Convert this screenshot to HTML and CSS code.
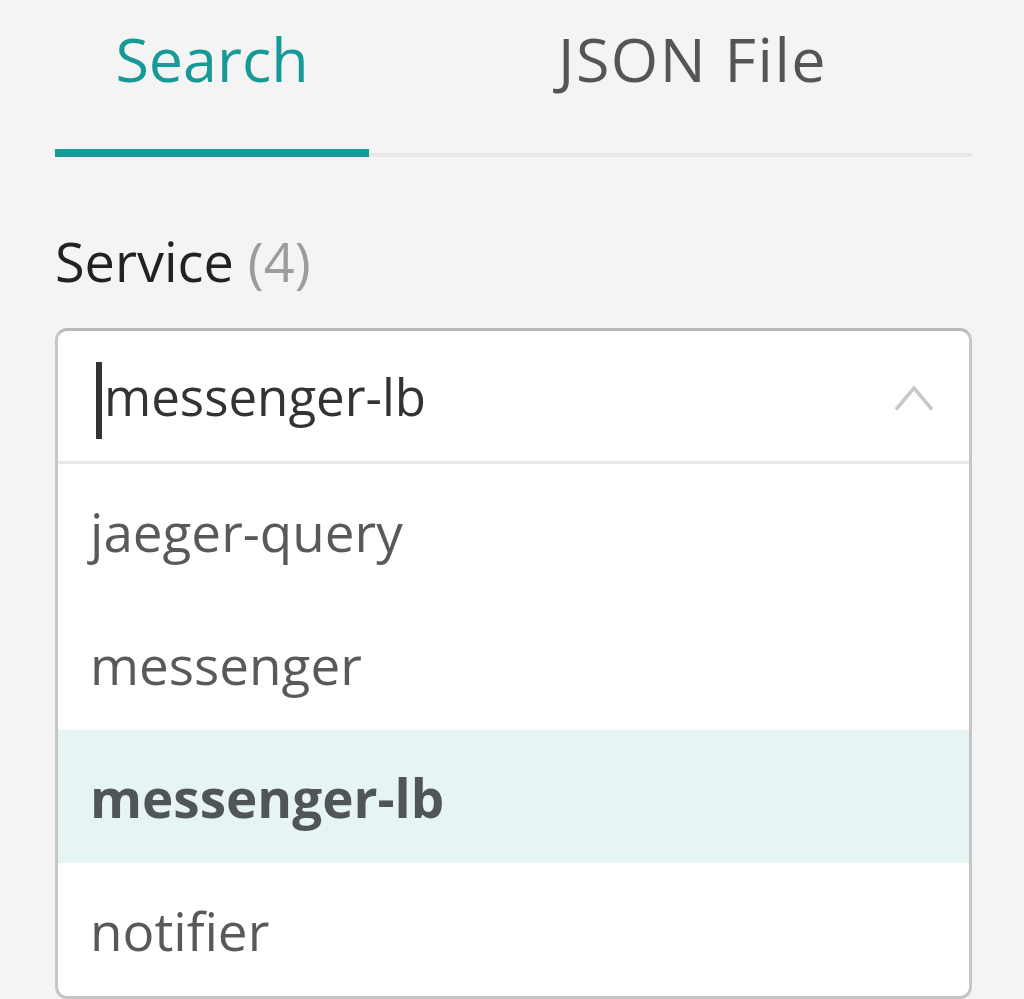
FILE: index.html
```html
<!DOCTYPE html>
<html lang="en">
<head>
<meta charset="utf-8">
<title>Search</title>
<link rel="stylesheet" href="styles.css">
</head>
<body>
<div class="panel">
  <div class="tabs">
    <div class="tab tab-active">Search</div>
    <div class="tab tab-second">JSON File</div>
  </div>
  <div class="field-label">Service <span class="count">(4)</span></div>
  <div class="select">
    <div class="select-input">
      <span class="caret"></span>
      <span class="select-value">messenger-lb</span>
      <svg class="chevron" width="42" height="28" viewBox="0 0 42 28" aria-hidden="true">
        <polyline points="3,25.5 21,4 39,25.5" fill="none" stroke="#c9c9c9" stroke-width="3.6"/>
      </svg>
    </div>
    <ul class="options">
      <li class="option">jaeger-query</li>
      <li class="option">messenger</li>
      <li class="option option-active">messenger-lb</li>
      <li class="option">notifier</li>
    </ul>
  </div>
</div>
</body>
</html>
```

FILE: styles.css
```css
html, body {
  margin: 0;
  padding: 0;
  background: #f4f4f4;
}

body {
  font-family: "Open Sans", "Noto Sans", sans-serif;
  overflow: hidden;
  height: 999px;
}

.panel {
  width: 917px;
  margin-left: 55px;
  padding-top: 17px;
}

.tabs {
  display: flex;
  border-bottom: 4px solid #e8e8e8;
}

.tab {
  font-size: 61px;
  line-height: 83px;
  padding-bottom: 49px;
  color: rgba(0, 0, 0, 0.65);
  white-space: nowrap;
}

.tab-active {
  width: 314px;
  text-align: center;
  color: #169a98;
  border-bottom: 8px solid #169a98;
  margin-bottom: -4px;
}

.tab-second {
  margin-left: 123px;
  padding-left: 66px;
  letter-spacing: 1.5px;
}

.field-label {
  margin-top: 67px;
  font-size: 54px;
  line-height: 74px;
  color: #222;
}

.count {
  color: #9c9c9c;
}

.select {
  margin-top: 30px;
  background: #fff;
  border: 3px solid #c6c6c6;
  border-top-color: #b9b9b9;
  border-radius: 12px;
  overflow: hidden;
}

.select-input {
  position: relative;
  display: flex;
  align-items: center;
  justify-content: space-between;
  height: 130px;
  padding: 0 34px 0 46px;
  border-bottom: 3px solid #e8e8e8;
}

.select-value {
  font-size: 51px;
  line-height: 130px;
  color: #333;
}

.caret {
  position: absolute;
  left: 38px;
  top: 31px;
  width: 6px;
  height: 77px;
  background: #333;
}

.chevron {
  display: block;
  margin-top: 4px;
}

.options {
  list-style: none;
  margin: 0;
  padding: 0;
}

.option {
  height: 133px;
  box-sizing: border-box;
  padding: 2px 0 0 32px;
  font-size: 53px;
  line-height: 131px;
  color: rgba(0, 0, 0, 0.65);
  white-space: nowrap;
}

.option-active {
  background: #e6f4f4;
  font-weight: 700;
}
```
